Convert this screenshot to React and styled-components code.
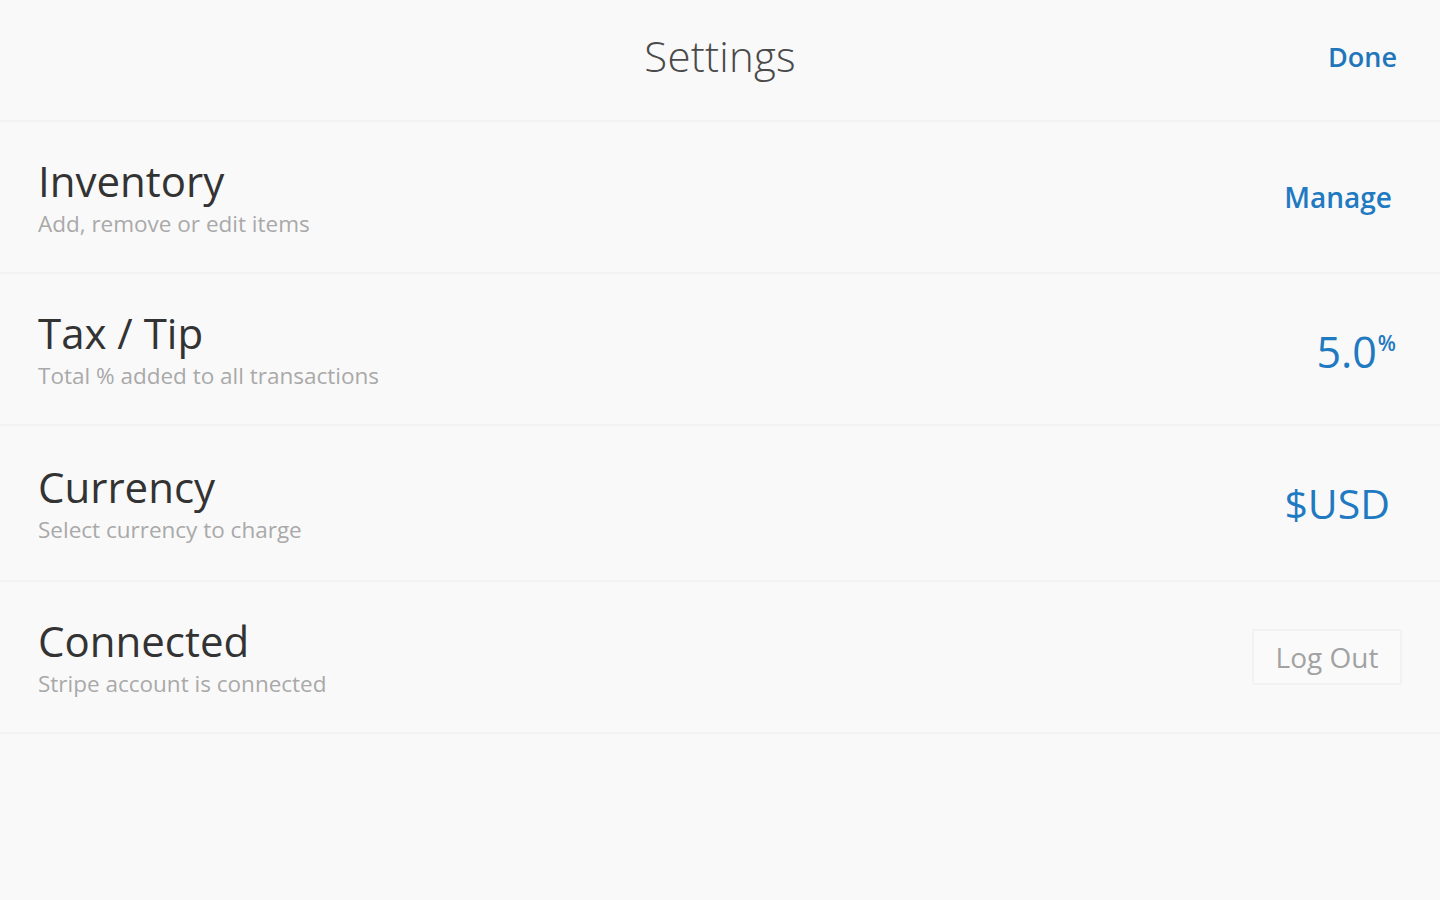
import React from "react";
import styled, { createGlobalStyle } from "styled-components";

const GlobalStyle = createGlobalStyle`
  html, body {
    margin: 0;
    padding: 0;
    background: #f9f9f9;
    font-family: "Open Sans", "Noto Sans", sans-serif;
  }
`;

const Page = styled.div`
  width: 100%;
  min-height: 900px;
  background: #f9f9f9;
`;

const Header = styled.header`
  position: relative;
  height: 122px;
  display: flex;
  align-items: center;
  justify-content: center;
  border-bottom: 2px solid #f3f3f3;
  box-sizing: border-box;
`;

const Title = styled.h1`
  margin: 0 0 10px;
  font-size: 42px;
  font-weight: 300;
  color: #4a4a4a;
  letter-spacing: 0.2px;
`;

const DoneButton = styled.button`
  position: absolute;
  right: 43px;
  top: 38px;
  background: none;
  border: none;
  padding: 0;
  font-family: inherit;
  font-size: 27px;
  font-weight: 600;
  color: #1f76ba;
  cursor: pointer;
`;

const List = styled.div`
  display: flex;
  flex-direction: column;
`;

const Row = styled.div`
  height: ${(p) => p.$h || 152}px;
  box-sizing: border-box;
  border-bottom: 2px solid #f3f3f3;
  display: flex;
  align-items: center;
  justify-content: space-between;
  padding: 0 ${(p) => p.$pr || 48}px 0 38px;
`;

const Text = styled.div`
  display: flex;
  flex-direction: column;
  margin-top: 5px;
`;

const RowTitle = styled.div`
  font-size: 42px;
  line-height: 40px;
  color: #333333;
`;

const RowSub = styled.div`
  margin-top: 9px;
  font-size: 22.5px;
  line-height: 28px;
  color: #a9a9a9;
`;

const Link = styled.span`
  font-size: ${(p) => p.$size}px;
  font-weight: ${(p) => p.$weight || 400};
  color: #1f7ac2;
  line-height: 1;
  display: inline-flex;
  align-items: flex-start;
  margin-top: ${(p) => p.$mt || 0}px;
`;

const Sup = styled.span`
  font-size: 21px;
  font-weight: 600;
  line-height: 1;
  margin-top: 3px;
  margin-left: 1px;
`;

const LogOut = styled.button`
  width: 150px;
  height: 56px;
  background: #fafafa;
  border: 2px solid #f2f2f2;
  border-radius: 2px;
  font-family: inherit;
  font-size: 28px;
  color: #a2a2a2;
  cursor: pointer;
`;

const rows = [
  { title: "Inventory", sub: "Add, remove or edit items" },
  { title: "Tax / Tip", sub: "Total % added to all transactions" },
  { title: "Currency", sub: "Select currency to charge" },
  { title: "Connected", sub: "Stripe account is connected" },
];

function Settings() {
  return (
    <Page>
      <GlobalStyle />
      <Header>
        <Title>Settings</Title>
        <DoneButton>Done</DoneButton>
      </Header>
      <List>
        <Row $pr={48}>
          <Text>
            <RowTitle>{rows[0].title}</RowTitle>
            <RowSub>{rows[0].sub}</RowSub>
          </Text>
          <Link $size={28} $weight={600}>Manage</Link>
        </Row>
        <Row $pr={44}>
          <Text>
            <RowTitle>{rows[1].title}</RowTitle>
            <RowSub>{rows[1].sub}</RowSub>
          </Text>
          <Link $size={43} $mt={4}>
            5.0<Sup>%</Sup>
          </Link>
        </Row>
        <Row $pr={50} $h={156}>
          <Text>
            <RowTitle>{rows[2].title}</RowTitle>
            <RowSub>{rows[2].sub}</RowSub>
          </Text>
          <Link $size={41}>$USD</Link>
        </Row>
        <Row $pr={38}>
          <Text>
            <RowTitle>{rows[3].title}</RowTitle>
            <RowSub>{rows[3].sub}</RowSub>
          </Text>
          <LogOut>Log Out</LogOut>
        </Row>
      </List>
    </Page>
  );
}

export default function App() {
  return <Settings />;
}
